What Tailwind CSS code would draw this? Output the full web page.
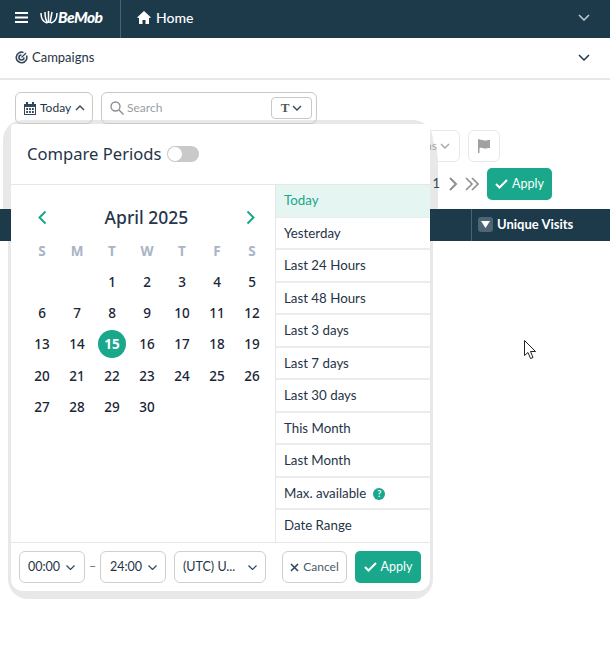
<!DOCTYPE html>
<html><head><meta charset="utf-8">
<script src="https://cdn.jsdelivr.net/npm/@tailwindcss/browser@4"></script>
</head>
<body class="bg-white">
<div class="relative w-[610px] h-[653px] overflow-hidden font-['Lato','Liberation_Sans',sans-serif] text-[#1f3447]">
  <header class="flex items-center h-[38px] pb-[3px] bg-[#1d3a4b] text-white">
    <div class="flex items-center w-[121px] h-[38px] mt-[3px] pb-[3px] border-r border-[#4a6373] pl-[15px]">
      <svg width="13" height="11" viewBox="0 0 13 11" fill="none" stroke="#fff" stroke-width="2"><path d="M0 1h13M0 5.500h13M0 10h13"/></svg>
      <svg class="ml-[12px]" width="18" height="13" viewBox="0 0 18 13" fill="none" stroke="#fff" stroke-width="1.500"><path d="M1 2c0 5 2 9 6 10M17 2c0 5-2 9-6 10M5 1c0 5 1 9 3 11M12 1l-2 11M8.500 0v12"/></svg>
      <span class="text-[15.500px] font-black italic tracking-[-0.5px]">BeMob</span>
    </div>
    <div class="flex items-center pl-[16px] gap-[5px]">
      <svg width="14" height="13" viewBox="0 0 14 13" fill="#fff"><path d="M7 0 14 6.500 12.500 7 12 6.800V13H8.500V9h-3v4H2V6.800L1.500 7 0 6.500z"/></svg>
      <span class="text-[14px] font-medium pb-[1px]">Home</span>
    </div>
    <svg class="ml-auto mr-[20px]" width="12" height="7" viewBox="0 0 12 7" fill="none" stroke="#c3ccd2" stroke-width="1.500"><path d="m1 1 5 5 5-5"/></svg>
  </header>
  <div class="flex items-center h-[42px] pb-[1px] border-b-2 border-[#e7e7e7] pl-[15px]">
    <svg width="13" height="13" viewBox="0 0 13 13" fill="none" stroke="#33475a" stroke-width="1.600"><path d="M11.500 4.500A5.300 5.300 0 1 1 8.500 1.500"/><path d="M9 6.500A2.500 2.500 0 1 1 6.500 4"/><path d="M6.500 6.500 11 2" stroke-width="1.300"/></svg>
    <span class="ml-[4px] text-[13px]">Campaigns</span>
    <svg class="ml-auto mr-[20px]" width="12" height="7" viewBox="0 0 12 7" fill="none" stroke="#1d3a4b" stroke-width="1.500"><path d="m1 1 5 5 5-5"/></svg>
  </div>
  <div class="flex items-center gap-[8px] h-[32px] mt-[12px] ml-[15px] relative z-30">
    <div class="flex items-center w-[78px] h-full border border-[#c9c9c9] rounded-[6px] pl-[8px] text-[12px] gap-[4px]">
      <svg width="12" height="13" viewBox="0 0 12 13" fill="#33475a"><path d="M2 0h2v2h4V0h2v2h2v11H0V2h2zM1 5v7h10V5z"/><path d="M2.200 6h1.800v2H2.200zM5.100 6h1.800v2H5.100zM8 6h1.800v2H8zM2.200 9h1.800v2H2.200zM5.100 9h1.800v2H5.100zM8 9h1.800v2H8z"/></svg>
      <span>Today</span>
      <svg width="10" height="6" viewBox="0 0 10 6" fill="none" stroke="#33475a" stroke-width="1.400"><path d="m1 5 4-4 4 4"/></svg>
    </div>
    <div class="flex items-center w-[216px] h-full border border-[#c9c9c9] rounded-[6px] pl-[8px] pr-[4px]">
      <svg width="14" height="14" viewBox="0 0 14 14" fill="none" stroke="#8b8f94" stroke-width="1.400"><circle cx="5.500" cy="5.500" r="4.500"/><path d="m9 9 4.500 4.500"/></svg>
      <span class="ml-[3px] text-[12px] text-[#9a9ea3]">Search</span>
      <div class="ml-auto flex items-center justify-center gap-[3px] w-[41px] h-[22px] border border-[#c9c9c9] rounded-[4px]">
        <span class="font-['Liberation_Serif',serif] font-bold text-[13px] text-[#555]">T</span>
        <svg width="10" height="6" viewBox="0 0 10 6" fill="none" stroke="#33475a" stroke-width="1.400"><path d="m1 1 4 4 4-4"/></svg>
      </div>
    </div>
  </div>
  <div class="relative z-10 flex justify-end items-center gap-[8px] h-[32px] mt-[6px] pr-[110px]">
    <div class="flex items-center justify-end gap-[3px] w-[60px] h-full border border-[#e8e8e8] rounded-[6px] pr-[9px] text-[12px] text-[#a6a6a6]">
      <span>ns</span>
      <svg width="10" height="6" viewBox="0 0 10 6" fill="none" stroke="#a6a6a6" stroke-width="1.400"><path d="m1 1 4 4 4-4"/></svg>
    </div>
    <div class="flex items-center justify-center w-[32px] h-full border border-[#e8e8e8] rounded-[6px]">
      <svg width="12" height="14" viewBox="0 0 12 14" fill="#a0a0a0"><path d="M0 0h1.500v14H0zM1.500 1C4 0 6 2 8 1.500s3-.5 4-.5v8c-1 0-2 0-4 .5s-4-1.500-6.500-.5z"/></svg>
    </div>
  </div>
  <div class="relative z-10 flex justify-end items-center h-[32px] mt-[6px] pr-[58px]">
    <span class="text-[13px] text-[#33475a] mr-[9px]">f 1</span>
    <svg width="9" height="14" viewBox="0 0 9 14" fill="none" stroke="#8f8f8f" stroke-width="2"><path d="m1 1 6 6-6 6"/></svg>
    <svg class="ml-[7px] mr-[8px]" width="14" height="14" viewBox="0 0 14 14" fill="none" stroke="#8f8f8f" stroke-width="1.600"><path d="m1 1 6 6-6 6M7 1l6 6-6 6"/></svg>
    <div class="flex items-center justify-center gap-[4px] w-[65px] h-full rounded-[5px] bg-[#19a88b] text-white text-[12.500px]">
      <svg width="13" height="10" viewBox="0 0 13 10" fill="none" stroke="#fff" stroke-width="2"><path d="m1 5 3.500 3.500L12 1"/></svg>
      <span>Apply</span>
    </div>
  </div>
  <div class="relative z-10 flex justify-end h-[32px] mt-[9px] bg-[#1d3a4b] text-white">
    <div class="flex items-center w-[139px] h-full pb-[1px] border-l border-[#4a6373] pl-[6px] gap-[4px]">
      <div class="flex items-center justify-center w-[15px] h-[15px] rounded-[3px] bg-[#4f6475]">
        <svg width="9" height="7" viewBox="0 0 9 7" fill="#fff"><path d="M0 0h9L4.500 7z"/></svg>
      </div>
      <span class="text-[13px] font-bold leading-[14px] pb-[2px]">Unique Visits</span>
    </div>
  </div>

  <div class="absolute left-[3px] top-[120px] w-[435px] h-[89px] rounded-tl-[20px] rounded-tr-[40px] bg-[#e8e8e8]"></div>
  <div class="absolute left-[8px] top-[120px] w-[425px] h-[479px] rounded-[20px] bg-[#e8e8e8]"></div>

  <section class="absolute z-20 left-[11px] top-[124px] w-[419px] h-[467px] rounded-b-[12px] rounded-t-[4px] bg-white flex flex-col">
    <div class="flex items-center h-[61px] border-b border-[#e6e6e6] pl-[16px] gap-[6px]">
      <span class="font-['Noto_Sans',sans-serif] text-[16.600px] text-[#1f3447] pt-[1px]">Compare Periods</span>
      <div class="flex items-center w-[32px] h-[16px] rounded-full bg-[#c9c9c9] pl-[1px]"><div class="w-[14px] h-[14px] rounded-full bg-white"></div></div>
    </div>
    <div class="flex h-[358px] border-b border-[#e6e6e6]">
      <div class="w-[264px] font-['Noto_Sans',sans-serif]">
        <div class="flex items-center justify-between h-[34px] mt-[15px] pl-[26px] pr-[19px]">
          <svg width="10" height="15" viewBox="0 0 10 15" fill="none" stroke="#19a88b" stroke-width="2"><path d="M8.500 1.500 2.500 7.500l6 6"/></svg>
          <span class="text-[17.500px] font-medium text-[#27364a]">April 2025</span>
          <svg width="10" height="15" viewBox="0 0 10 15" fill="none" stroke="#19a88b" stroke-width="2"><path d="m1.500 1.500 6 6-6 6"/></svg>
        </div>
        <div class="grid grid-cols-[repeat(7,35px)] auto-rows-[31.250px] place-items-center ml-[13.500px] text-[13.500px] font-medium text-[#1a2536] mt-[1px]">
          <span class="font-bold text-[#a8b4c6]">S</span><span class="font-bold text-[#a8b4c6]">M</span><span class="font-bold text-[#a8b4c6]">T</span><span class="font-bold text-[#a8b4c6]">W</span><span class="font-bold text-[#a8b4c6]">T</span><span class="font-bold text-[#a8b4c6]">F</span><span class="font-bold text-[#a8b4c6]">S</span>
          <span></span><span></span><span>1</span><span>2</span><span>3</span><span>4</span><span>5</span>
          <span>6</span><span>7</span><span>8</span><span>9</span><span>10</span><span>11</span><span>12</span>
          <span>13</span><span>14</span><span class="flex items-center justify-center w-[28px] h-[28px] rounded-full bg-[#19a88b] text-white font-bold">15</span><span>16</span><span>17</span><span>18</span><span>19</span>
          <span>20</span><span>21</span><span>22</span><span>23</span><span>24</span><span>25</span><span>26</span>
          <span>27</span><span>28</span><span>29</span><span>30</span>
        </div>
      </div>
      <ul class="flex-1 border-l border-[#e6e6e6] text-[13.300px] text-[#1f3447]">
        <li class="flex items-center h-[32.500px] pl-[8px] bg-[#e5f5f1] text-[#19a88b] border-b border-[#ececec]">Today</li>
        <li class="flex items-center h-[32.500px] pl-[8px] pt-[2px] border-b-2 border-[#ececec]">Yesterday</li>
        <li class="flex items-center h-[32.500px] pl-[8px] pt-[2px] border-b-2 border-[#ececec]">Last 24 Hours</li>
        <li class="flex items-center h-[32.500px] pl-[8px] pt-[2px] border-b-2 border-[#ececec]">Last 48 Hours</li>
        <li class="flex items-center h-[32.500px] pl-[8px] pt-[2px] border-b-2 border-[#ececec]">Last 3 days</li>
        <li class="flex items-center h-[32.500px] pl-[8px] pt-[2px] border-b-2 border-[#ececec]">Last 7 days</li>
        <li class="flex items-center h-[32.500px] pl-[8px] pt-[2px] border-b-2 border-[#ececec]">Last 30 days</li>
        <li class="flex items-center h-[32.500px] pl-[8px] pt-[2px] border-b-2 border-[#ececec]">This Month</li>
        <li class="flex items-center h-[32.500px] pl-[8px] pt-[2px] border-b-2 border-[#ececec]">Last Month</li>
        <li class="flex items-center h-[32.500px] pl-[8px] pt-[2px] border-b-2 border-[#ececec] gap-[7px]">Max. available
          <span class="flex items-center justify-center w-[12px] h-[12px] rounded-full bg-[#19a88b] text-white text-[9px] font-bold">?</span>
        </li>
        <li class="flex items-center h-[32.500px] pl-[8px]">Date Range</li>
      </ul>
    </div>
    <div class="flex items-center flex-1 pl-[8px] pr-[9px] text-[12.500px]">
      <div class="flex items-center justify-between w-[66px] h-[32px] border border-[#cfcfcf] rounded-[6px] pl-[8px] pr-[9px]">
        <span>00:00</span><svg width="9" height="5" viewBox="0 0 9 5" fill="none" stroke="#33475a" stroke-width="1.200"><path d="m.5.500 4 4 4-4"/></svg>
      </div>
      <span class="w-[15px] text-center text-[#777]">–</span>
      <div class="flex items-center justify-between w-[66px] h-[32px] border border-[#cfcfcf] rounded-[6px] pl-[9px] pr-[8px]">
        <span>24:00</span><svg width="9" height="5" viewBox="0 0 9 5" fill="none" stroke="#33475a" stroke-width="1.200"><path d="m.5.500 4 4 4-4"/></svg>
      </div>
      <div class="flex items-center justify-between w-[92px] h-[32px] ml-[8px] border border-[#cfcfcf] rounded-[6px] pl-[8px] pr-[8px]">
        <span>(UTC) U...</span><svg width="9" height="5" viewBox="0 0 9 5" fill="none" stroke="#33475a" stroke-width="1.200"><path d="m.5.500 4 4 4-4"/></svg>
      </div>
      <div class="flex items-center justify-center gap-[4px] w-[65px] h-[32px] ml-[16px] border border-[#cfcfcf] rounded-[6px] text-[12px] text-[#4a5a69]">
        <svg width="9" height="9" viewBox="0 0 9 9" fill="none" stroke="#33475a" stroke-width="1.600"><path d="m1 1 7 7M8 1 1 8"/></svg>
        <span>Cancel</span>
      </div>
      <div class="flex items-center justify-center gap-[4px] w-[66px] h-[32px] ml-[8px] rounded-[5px] bg-[#19a88b] text-white">
        <svg width="13" height="10" viewBox="0 0 13 10" fill="none" stroke="#fff" stroke-width="2"><path d="m1 5 3.500 3.500L12 1"/></svg>
        <span>Apply</span>
      </div>
    </div>
  </section>

  <svg class="absolute z-30 left-[524px] top-[340px]" width="13" height="20" viewBox="0 0 13 20" fill="#fff" stroke="#222" stroke-width="1"><path d="M.5.500v15l3.500-3 2.500 6 2.500-1-2.500-6h5z"/></svg>
</div>
</body></html>
